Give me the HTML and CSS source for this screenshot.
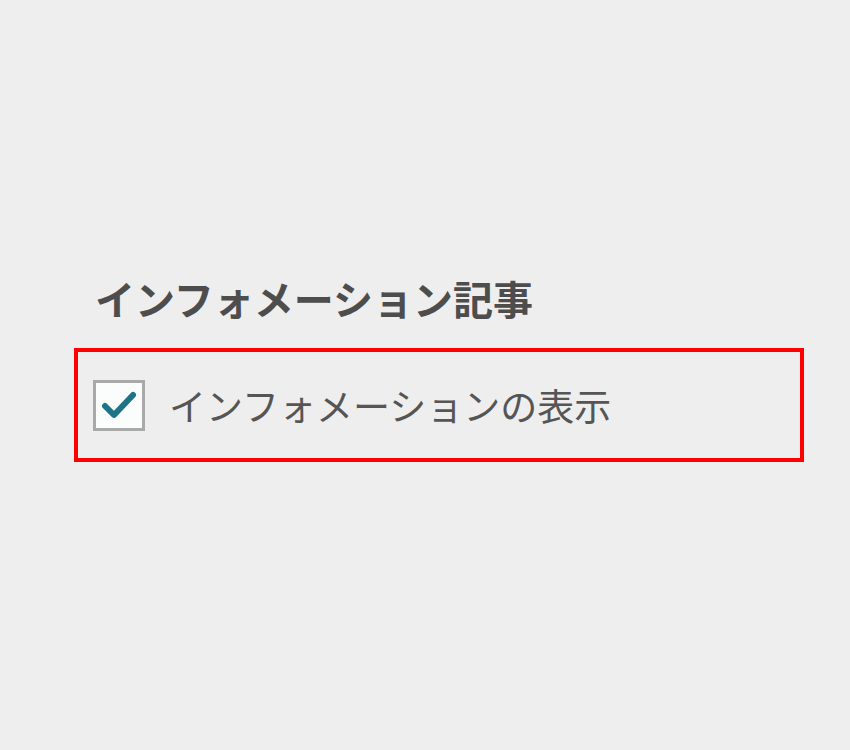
FILE: index.html
```html
<!DOCTYPE html>
<html lang="ja">
<head>
    <meta charset="UTF-8">
    <meta name="viewport" content="width=device-width, initial-scale=1.0">
    <title>インフォメーション記事</title>
    <link rel="stylesheet" href="styles.css">
</head>
<body>
    <div class="panel">
        <h2 class="panel-title">インフォメーション記事</h2>

        <!-- Display option -->
        <label class="option">
            <span class="check">
                <svg viewBox="0 0 40 40" width="40" height="40">
                    <path d="M6 21 L15 30 L34 10" fill="none" stroke="#1d7486" stroke-width="6" stroke-linecap="round" stroke-linejoin="round"/>
                </svg>
            </span>
            <span class="option-text">インフォメーションの表示</span>
        </label>
    </div>
</body>
</html>
```

FILE: styles.css
```css
body {
    margin: 0;
    padding: 0;
    background-color: #eeeeee;
    font-family: "Noto Sans CJK JP", "Noto Sans", sans-serif;
    color: #555;
}
.panel {
    padding: 272px 0 0 74px;
}
.panel-title {
    margin: 0 0 24px 21px;
    font-size: 40px;
    font-weight: bold;
    line-height: 1.3;
    color: #4d4d4d;
}
.option {
    display: flex;
    align-items: center;
    gap: 24px;
    width: 707px;
    height: 106px;
    padding-left: 15px;
    box-sizing: content-box;
    border: 4px solid #ff0000;
}
.check {
    display: flex;
    align-items: center;
    justify-content: center;
    width: 46px;
    height: 45px;
    border: 3px solid #a9a9a9;
    background: #fbfdfd;
}
.option-text {
    font-size: 37px;
    color: #555;
}
```
